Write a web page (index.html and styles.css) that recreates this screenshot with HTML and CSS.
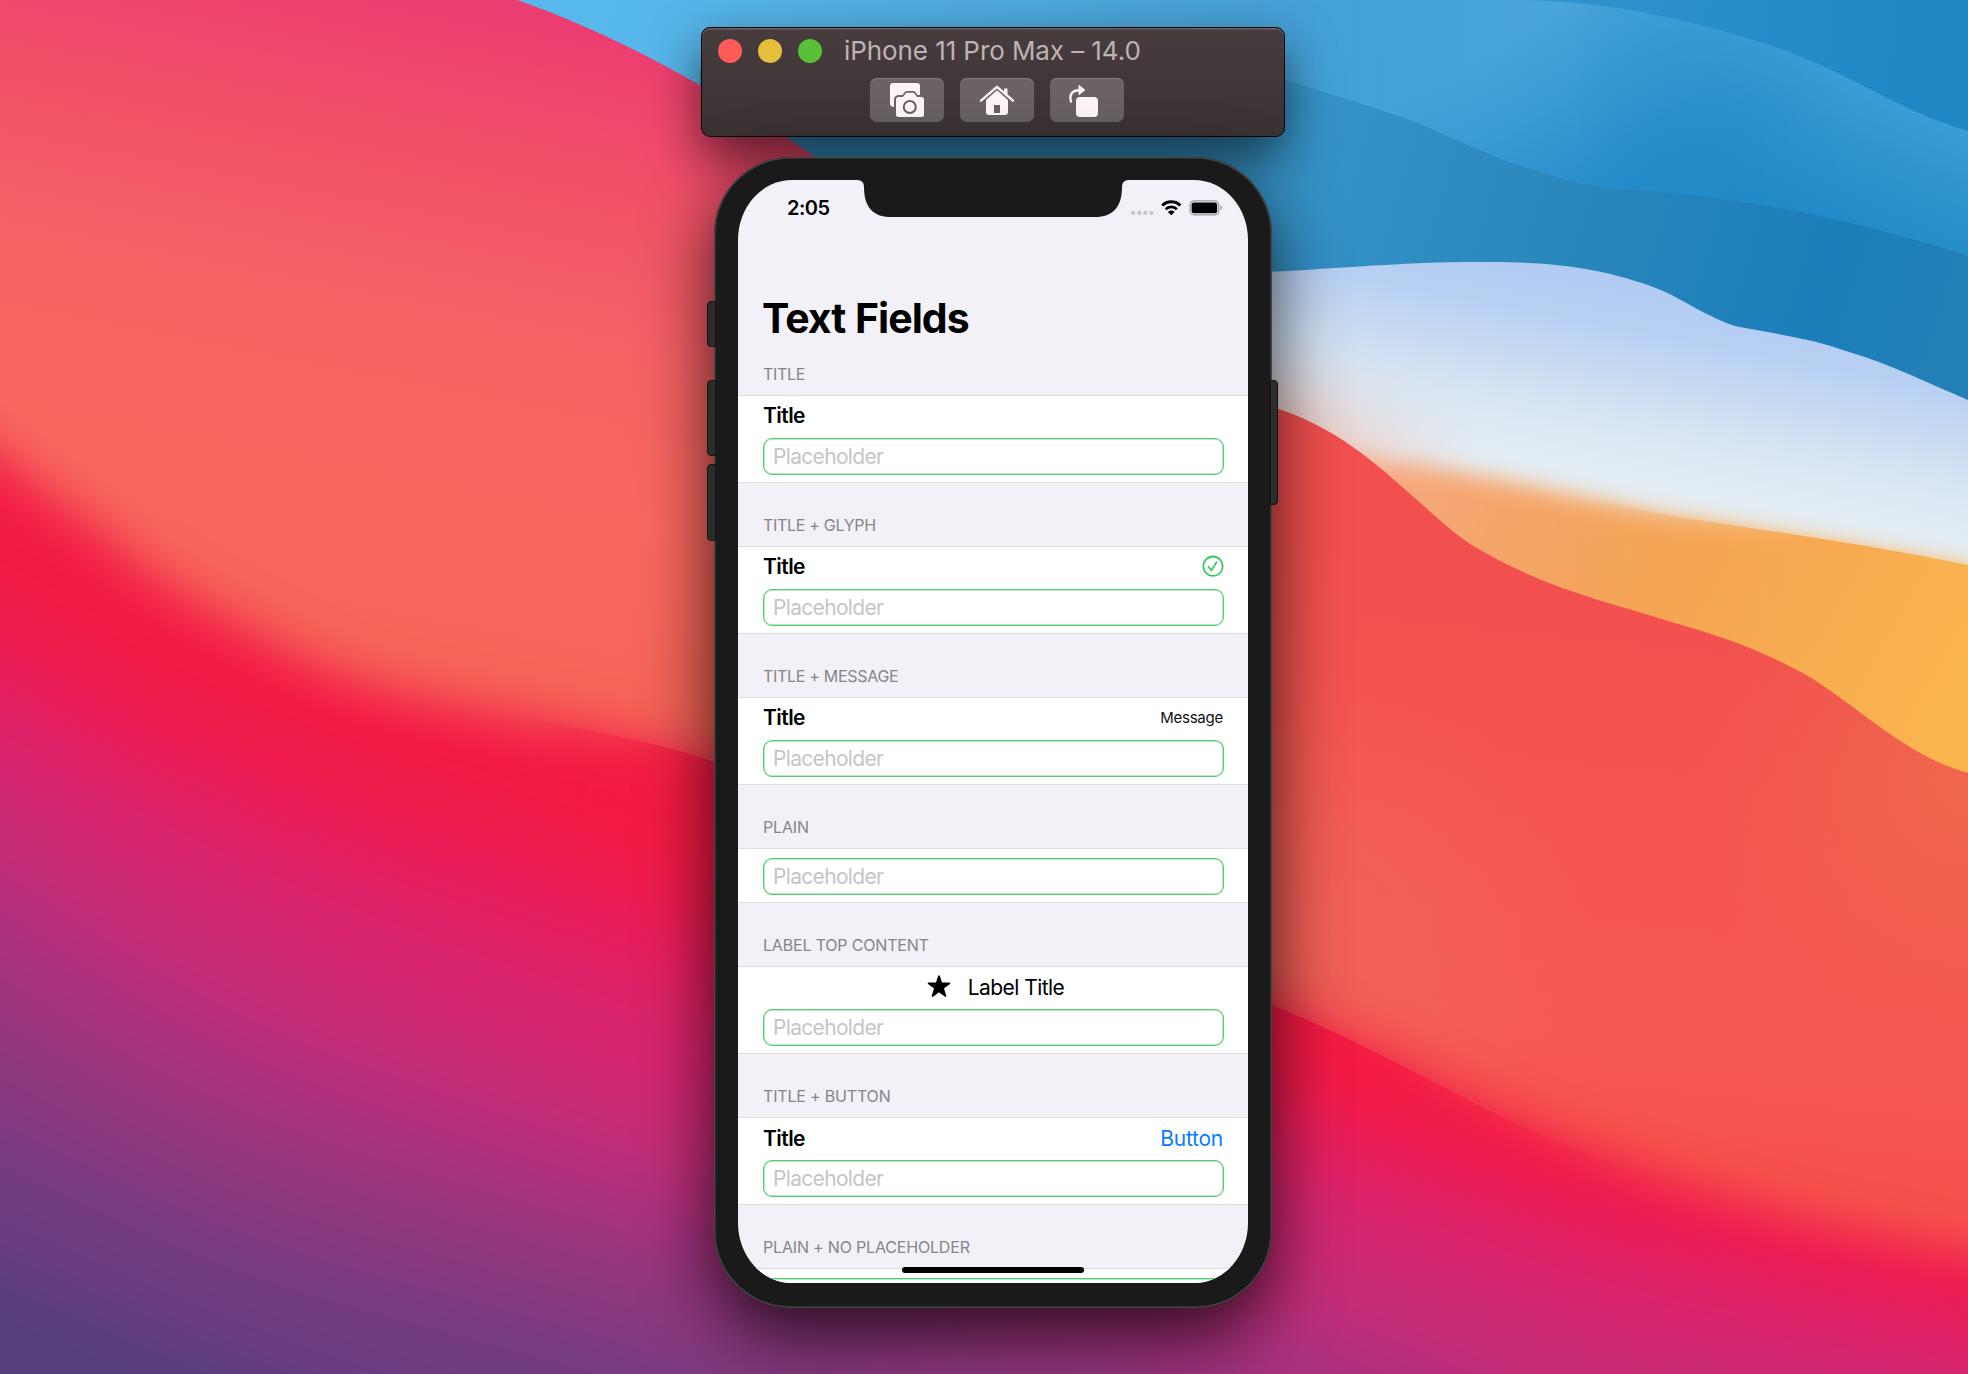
FILE: index.html
```html
<!DOCTYPE html>
<html lang="en">
<head>
<meta charset="utf-8">
<title>iPhone 11 Pro Max – 14.0</title>
<link rel="stylesheet" href="styles.css">
</head>
<body>
<svg class="wallpaper" viewBox="0 0 1968 1374" preserveAspectRatio="none" aria-hidden="true">
  <defs>
    <linearGradient id="sky" gradientUnits="userSpaceOnUse" x1="600" y1="0" x2="1900" y2="150">
      <stop offset="0" stop-color="#57b8eb"/><stop offset=".45" stop-color="#4aa2d6"/><stop offset=".8" stop-color="#2b90cc"/><stop offset="1" stop-color="#1f88c5"/>
    </linearGradient>
    <linearGradient id="sky2" gradientUnits="userSpaceOnUse" x1="1520" y1="30" x2="1620" y2="200">
      <stop offset="0" stop-color="#48a4d9"/><stop offset=".35" stop-color="#3d9cd4"/><stop offset=".75" stop-color="#2c91ce"/><stop offset="1" stop-color="#258cca"/>
    </linearGradient>
    <linearGradient id="sky2b" gradientUnits="userSpaceOnUse" x1="1780" y1="40" x2="1720" y2="180">
      <stop offset="0" stop-color="#3f9fd5"/><stop offset=".4" stop-color="#3095cf"/><stop offset="1" stop-color="#218ac6"/>
    </linearGradient>
    <linearGradient id="sky3" gradientUnits="userSpaceOnUse" x1="1280" y1="120" x2="1960" y2="330">
      <stop offset="0" stop-color="#3894c8"/><stop offset=".5" stop-color="#2785ba"/><stop offset=".8" stop-color="#1b7db9"/><stop offset="1" stop-color="#2380b6"/>
    </linearGradient>
    <linearGradient id="mist" gradientUnits="userSpaceOnUse" x1="1600" y1="275" x2="1555" y2="510">
      <stop offset="0" stop-color="#b2cbf3"/><stop offset=".2" stop-color="#b8d0f3"/><stop offset=".6" stop-color="#d9e6f2"/><stop offset="1" stop-color="#ecf3f7"/>
    </linearGradient>
    <linearGradient id="peach" gradientUnits="userSpaceOnUse" x1="1310" y1="470" x2="1345" y2="345">
      <stop offset="0" stop-color="#f3b49c"/><stop offset=".35" stop-color="#ecc4b8" stop-opacity=".8"/><stop offset="1" stop-color="#d8d4e4" stop-opacity="0"/>
    </linearGradient>
    <linearGradient id="amber" gradientUnits="userSpaceOnUse" x1="1400" y1="450" x2="1940" y2="760">
      <stop offset="0" stop-color="#f7a880"/><stop offset=".22" stop-color="#f5a568"/><stop offset=".5" stop-color="#f6a552"/><stop offset="1" stop-color="#fab54e"/>
    </linearGradient>
    <linearGradient id="coral" gradientUnits="userSpaceOnUse" x1="420" y1="0" x2="300" y2="620">
      <stop offset="0" stop-color="#ec3d71"/><stop offset=".18" stop-color="#f04d69"/><stop offset=".45" stop-color="#f56065"/><stop offset=".75" stop-color="#f8685f"/><stop offset="1" stop-color="#f66558"/>
    </linearGradient>
    <linearGradient id="ember" gradientUnits="userSpaceOnUse" x1="1500" y1="560" x2="1440" y2="1140">
      <stop offset="0" stop-color="#f2504f"/><stop offset=".4" stop-color="#f5554f"/><stop offset=".8" stop-color="#f55a52"/><stop offset="1" stop-color="#f7514c"/>
    </linearGradient>
    <radialGradient id="glowA" gradientUnits="userSpaceOnUse" cx="1968" cy="780" r="280">
      <stop offset="0" stop-color="#ee684d"/><stop offset="1" stop-color="#f1604d" stop-opacity="0"/>
    </radialGradient>
    <radialGradient id="glowB" gradientUnits="userSpaceOnUse" cx="1330" cy="930" r="260">
      <stop offset="0" stop-color="#f0655a" stop-opacity=".7"/><stop offset="1" stop-color="#f0655a" stop-opacity="0"/>
    </radialGradient>
    <linearGradient id="mid" gradientUnits="userSpaceOnUse" x1="0" y1="0" x2="1968" y2="0">
      <stop offset=".27" stop-color="#000"/><stop offset=".37" stop-color="#fff"/><stop offset=".67" stop-color="#fff"/><stop offset=".84" stop-color="#000"/>
    </linearGradient>
    <linearGradient id="amberMid" gradientUnits="userSpaceOnUse" x1="0" y1="0" x2="1968" y2="0">
      <stop offset=".8" stop-color="#000"/><stop offset=".92" stop-color="#fff"/>
    </linearGradient>
    <linearGradient id="skyFade" gradientUnits="userSpaceOnUse" x1="0" y1="0" x2="1968" y2="0">
      <stop offset=".55" stop-color="#000"/><stop offset=".76" stop-color="#fff"/>
    </linearGradient>
    <linearGradient id="skyFadeB" gradientUnits="userSpaceOnUse" x1="0" y1="0" x2="1968" y2="0">
      <stop offset=".8" stop-color="#000"/><stop offset=".94" stop-color="#fff"/>
    </linearGradient>
    <linearGradient id="peachFade" gradientUnits="userSpaceOnUse" x1="0" y1="0" x2="1968" y2="0">
      <stop offset=".66" stop-color="#fff"/><stop offset=".75" stop-color="#000"/>
    </linearGradient>
    <mask id="midMask" maskUnits="userSpaceOnUse" x="0" y="0" width="1968" height="1374"><rect width="1968" height="1374" fill="url(#mid)"/></mask>
    <mask id="amberMask" maskUnits="userSpaceOnUse" x="0" y="0" width="1968" height="1374"><rect width="1968" height="1374" fill="url(#amberMid)"/></mask>
    <mask id="skyMask" maskUnits="userSpaceOnUse" x="0" y="0" width="1968" height="1374"><rect width="1968" height="1374" fill="url(#skyFade)"/></mask>
    <mask id="skyMaskB" maskUnits="userSpaceOnUse" x="0" y="0" width="1968" height="1374"><rect width="1968" height="1374" fill="url(#skyFadeB)"/></mask>
    <mask id="peachMask" maskUnits="userSpaceOnUse" x="0" y="0" width="1968" height="1374"><rect width="1968" height="1374" fill="url(#peachFade)"/></mask>
    <filter id="soft" filterUnits="userSpaceOnUse" x="-200" y="-100" width="2400" height="1700" color-interpolation-filters="sRGB"><feGaussianBlur stdDeviation="24"/></filter>
    <filter id="softer" filterUnits="userSpaceOnUse" x="-300" y="-100" width="2600" height="1800" color-interpolation-filters="sRGB"><feGaussianBlur stdDeviation="34"/></filter>
    <filter id="haze" filterUnits="userSpaceOnUse" x="1000" y="200" width="1200" height="800" color-interpolation-filters="sRGB"><feGaussianBlur stdDeviation="11"/></filter>
    <clipPath id="ridge"><path d="M1000 400H1240C1320 412 1370 458 1417 500C1440 520 1460 540 1484 552C1550 590 1610 602 1671 622C1715 634 1755 648 1795 669C1850 697 1900 755 1968 773V1374H1000Z"/></clipPath>
    <clipPath id="mistClip"><path d="M1000 273H1240C1330 270 1400 261 1493 262C1560 262 1605 270 1648 285C1680 296 1700 314 1735 326C1775 334 1810 338 1849 352C1890 364 1930 384 1968 400V900H1000Z"/></clipPath>
    <clipPath id="lowClip"><path d="M0 0H517C570 18 640 50 701 86C740 108 790 138 830 168L1000 300L1000 400H1240L1500 700H1968V1374H0Z"/></clipPath>
    <path id="crimson" d="M-200 300C-100 370 10 470 90 524C130 555 150 575 181 593C215 613 240 625 272 643C320 668 360 684 407 695C450 705 500 713 543 722C600 732 650 742 700 757C900 830 1100 935 1272 1005C1350 1037 1420 1075 1492 1112C1600 1163 1700 1198 1804 1227C1880 1245 1968 1262 2200 1295V1700H-200Z"/>
  </defs>
  <rect width="1968" height="1374" fill="url(#sky)"/>
  <path mask="url(#skyMask)" fill="url(#sky2)" d="M1050 0H1530C1610 3 1680 17 1760 42C1840 66 1890 108 1968 131V320H1050Z"/>
  <path mask="url(#skyMaskB)" fill="url(#sky2b)" d="M1530 0C1610 3 1680 17 1760 42C1840 66 1890 108 1968 131V320H1530Z"/>
  <path fill="url(#sky3)" d="M700 70H1240C1300 82 1350 100 1404 118C1450 135 1490 158 1537 171C1565 180 1590 187 1617 189C1740 196 1850 218 1968 256V500H700Z"/>
  <g clip-path="url(#mistClip)">
    <rect x="1000" y="250" width="968" height="600" fill="url(#mist)"/>
    <rect x="1000" y="250" width="968" height="400" fill="url(#peach)" mask="url(#peachMask)"/>
    <path filter="url(#haze)" fill="url(#amber)" d="M1200 470C1290 455 1350 458 1404 464C1500 475 1600 503 1671 516C1770 533 1870 547 2100 592V1000H1200Z"/>
    <path mask="url(#amberMask)" fill="url(#amber)" d="M1404 456C1500 475 1600 503 1671 516C1770 531 1870 545 1968 565V1000H1404Z"/>
  </g>
  <g clip-path="url(#ridge)">
    <rect x="1000" y="380" width="968" height="994" fill="url(#ember)"/>
    <rect x="1000" y="380" width="968" height="994" fill="url(#glowA)"/>
    <rect x="1000" y="380" width="968" height="994" fill="url(#glowB)"/>
  </g>
  <path fill="url(#coral)" d="M0 0H517C570 18 640 50 701 86C740 108 790 138 830 168L1000 300V1374H0Z"/>
  <g clip-path="url(#lowClip)">
    <use href="#crimson" fill="#f21c47" filter="url(#soft)"/>
    <use href="#crimson" fill="#f41a43" mask="url(#midMask)"/>
    <g filter="url(#softer)">
      <path fill="#e81e5c" d="M-200 540L0 635C120 710 220 755 350 800S600 870 700 910S1100 1035 1272 1090S1520 1175 1620 1202S1968 1290 2200 1335V1800H-200Z"/>
      <path fill="#d8256e" d="M-200 610L0 705C120 780 220 830 350 880S600 965 700 1005S1100 1100 1272 1150S1520 1235 1620 1262S1968 1335 2200 1380V1800H-200Z"/>
      <path fill="#c52d79" d="M-200 700L0 795C120 870 220 930 350 985S600 1080 700 1115S1100 1180 1272 1228S1520 1320 1620 1345S1968 1390 2200 1430V1800H-200Z"/>
      <path fill="#a6327e" d="M-200 800L0 895C120 980 220 1040 350 1085S600 1170 700 1200S1100 1270 1272 1320S1600 1480 2200 1680V1800H-200Z"/>
      <path fill="#8a387f" d="M-200 920L0 1010C120 1090 220 1140 350 1180S600 1250 700 1275S1100 1350 1272 1420V1800H-200Z"/>
      <path fill="#713c80" d="M-200 1050L0 1130C120 1190 220 1240 350 1275S600 1340 700 1375S1000 1470 1272 1600V1800H-200Z"/>
      <path fill="#563f7e" d="M-200 1190L0 1260C120 1310 220 1360 350 1400S600 1490 700 1530V1800H-200Z"/>
    </g>
  </g>
</svg>

<main class="simulator">
  <header class="window">
    <div class="titlebar">
      <i class="light close"></i><i class="light minimize"></i><i class="light expand"></i>
      <span class="window-title">iPhone 11 Pro Max – 14.0</span>
    </div>
    <div class="toolbar">
      <button class="tool" aria-label="Screenshot"><svg viewBox="0 0 74 44">
        <path class="ink" d="M23 5H47Q50 5 50 8V17H47.500L45.500 14.300Q44.500 13 42.500 13H37.500Q35.500 13 34.500 14.300L32.500 17H28.500Q24 17.500 24 22V29Q20 29 20 25V8Q20 5 23 5Z"/>
        <path class="ink" fill-rule="evenodd" d="M28.500 19H33L35.600 15.500Q36.200 14.800 37.200 14.800H42.800Q43.800 14.800 44.400 15.500L47 19H51.500Q54 19 54 21.500V36.500Q54 39 51.500 39H28.500Q26 39 26 36.500V21.500Q26 19 28.500 19ZM39.800 22A7 7 0 1 0 39.800 36A7 7 0 1 0 39.800 22ZM39.800 24A5 5 0 1 1 39.800 34A5 5 0 1 1 39.800 24Z"/>
      </svg></button>
      <button class="tool" aria-label="Home"><svg viewBox="0 0 74 44">
        <path class="ink" d="M44 10.500H47.500V18L44 15Z"/>
        <path class="roof" d="M21 22.700L37 8.800L53 22.700"/>
        <path class="ink" fill-rule="evenodd" d="M37 12.200L48 22V34Q48 37 45 37H29Q26 37 26 34V22ZM34 27V35H40V27Z"/>
      </svg></button>
      <button class="tool" aria-label="Rotate"><svg viewBox="0 0 74 44">
        <rect class="ink" x="26" y="19" width="22" height="20" rx="4"/>
        <path class="arc" d="M21 23.500C19 17 22 12.300 29 12.300"/>
        <path class="ink" d="M28.500 7.800Q28.500 6.500 29.500 7.300L34.800 11.400Q35.500 12 34.800 12.600L29.500 16.800Q28.500 17.500 28.500 16.200Z"/>
      </svg></button>
    </div>
  </header>

  <section class="phone">
    <i class="side mute"></i><i class="side vol-up"></i><i class="side vol-down"></i><i class="side power"></i>
    <div class="screen">
      <svg class="notch" viewBox="0 0 270 37"><path d="M0 0H270Q264 .5 264 7C264 27 255 37 237 37H33C15 37 6 27 6 7Q6 .5 0 0Z"/></svg>
      <div class="status">
        <span class="time">2:05</span>
        <svg class="status-icons" viewBox="0 0 92 16">
          <g fill="#c5c5ca"><circle cx="3.200" cy="12.900" r="2.150"/><circle cx="9.300" cy="12.900" r="2.150"/><circle cx="15.300" cy="12.900" r="2.150"/><circle cx="21.300" cy="12.900" r="2.150"/></g>
          <g fill="none" stroke="#000" stroke-width="2.900"><path d="M32.300 5.500A12.600 12.600 0 0 1 50.300 5.500"/><path d="M35.700 9.200A8 8 0 0 1 46.900 9.200"/></g>
          <path d="M41.300 15.200L37.900 11.900A4.900 4.900 0 0 1 44.700 11.900Z"/>
          <rect x="60" y=".8" width="28.800" height="14" rx="4" fill="none" stroke="#9c9ca0" stroke-width="1.200"/>
          <rect x="61.600" y="2.400" width="25.600" height="10.800" rx="2.200"/>
          <path d="M90.300 5.300Q92 6.200 92 7.800T90.300 10.300Z" fill="#9c9ca0"/>
        </svg>
      </div>
      <h1 class="large-title">Text Fields</h1>

      <h2 class="group wide">Title</h2>
      <div class="cell">
        <div class="row"><b class="label">Title</b></div>
        <div class="field">Placeholder</div>
      </div>

      <h2 class="group wide">Title + Glyph</h2>
      <div class="cell">
        <div class="row"><b class="label">Title</b>
          <svg class="check" viewBox="0 0 22 22"><circle cx="11" cy="11.200" r="9.700"/><path d="M6.500 11.800L9.400 15.500L14.500 7.300"/></svg>
        </div>
        <div class="field">Placeholder</div>
      </div>

      <h2 class="group wide">Title + Message</h2>
      <div class="cell">
        <div class="row"><b class="label">Title</b><span class="message">Message</span></div>
        <div class="field">Placeholder</div>
      </div>

      <h2 class="group">Plain</h2>
      <div class="cell plain"><div class="field">Placeholder</div></div>

      <h2 class="group">Label Top Content</h2>
      <div class="cell">
        <div class="row centered">
          <svg class="star" viewBox="0 0 24 24"><path d="M12 2L14.500 9.400L22.500 9.400L16.100 14.200L18.500 22L12 17.300L5.500 22L7.900 14.200L1.500 9.400L9.500 9.400Z"/></svg>
          <span class="label-title">Label Title</span>
        </div>
        <div class="field">Placeholder</div>
      </div>

      <h2 class="group">Title + Button</h2>
      <div class="cell">
        <div class="row low"><b class="label">Title</b><a class="link">Button</a></div>
        <div class="field">Placeholder</div>
      </div>

      <h2 class="group">Plain + No Placeholder</h2>
      <div class="cell plain"><div class="field"></div></div>
      <i class="home-indicator"></i>
    </div>
  </section>
</main>
</body>
</html>
```
FILE: styles.css
```css
* { box-sizing: border-box; }

body {
  margin: 0;
  width: 1968px;
  height: 1374px;
  position: relative;
  overflow: hidden;
  font-family: Inter, "Liberation Sans", sans-serif;
  color: #000;
}

.wallpaper {
  position: absolute;
  inset: 0;
  width: 1968px;
  height: 1374px;
}

.simulator {
  position: relative;
  width: 584px;
  margin-left: 701px;
  padding-top: 27px;
  display: flex;
  flex-direction: column;
  align-items: center;
  gap: 20px;
}

/* Window chrome */
.window {
  width: 584px;
  height: 110px;
  border: 1px solid #050505;
  border-radius: 9px;
  background: linear-gradient(#483d3e, #3a3132);
  box-shadow: inset 0 1.5px 0 #6b6263, 0 22px 50px rgba(0, 0, 0, .6);
}

.titlebar {
  height: 45px;
  padding-left: 16px;
  display: flex;
  align-items: center;
  gap: 16px;
}

.light { width: 24px; height: 24px; border-radius: 50%; }
.close { background: #ff5c57; }
.minimize { background: #e5bf3c; }
.expand { background: #59c038; }

.window-title {
  margin-left: 6px;
  font-size: 26px;
  letter-spacing: -.080px;
  line-height: 45px;
  color: #bdb3b4;
  white-space: nowrap;
}

.toolbar {
  display: flex;
  gap: 16px;
  padding: 5px 0 0 168px;
}

.tool {
  width: 74px;
  height: 44px;
  padding: 0;
  border: 0;
  border-radius: 7px;
  background: linear-gradient(#6b6364, #675f60);
  box-shadow: inset 0 1px 0 #837b7c;
}

.tool svg { display: block; width: 74px; height: 44px; }
.ink { fill: #fcf4f6; }
.roof { fill: none; stroke: #fcf4f6; stroke-width: 2.400; stroke-linecap: round; stroke-linejoin: round; }
.arc { fill: none; stroke: #fcf4f6; stroke-width: 2.400; stroke-linecap: round; }

/* Device */
.phone {
  position: relative;
  width: 558px;
  height: 1151px;
  padding: 23px 24px 25px;
  border-radius: 77px;
  background: #1a1a1a;
  box-shadow: inset 0 0 0 1.500px #444, 0 26px 70px rgba(0, 0, 0, .76);
}

.side {
  position: absolute;
  left: -7px;
  width: 9px;
  border: 1px solid #151515;
  border-radius: 4px 0 0 4px;
  background: #2c2c2c;
}
.mute { top: 144px; height: 46px; }
.vol-up { top: 223px; height: 76px; }
.vol-down { top: 307px; height: 77px; }
.power { left: auto; right: -6px; top: 223px; height: 125px; width: 8px; border-radius: 0 4px 4px 0; }

.screen {
  position: relative;
  width: 510px;
  height: 1103px;
  overflow: hidden;
  border-radius: 54px / 60px;
  background: #f2f1f7;
}

.notch {
  position: absolute;
  top: 0;
  left: 120px;
  width: 270px;
  height: 37px;
  fill: #1a1a1a;
}

.status {
  height: 56px;
  padding: 0 26px 0 49px;
  display: flex;
  align-items: center;
  justify-content: space-between;
}
.time { font-size: 20px; font-weight: 600; letter-spacing: -.540px; }
.status-icons { width: 92px; height: 16px; }

.large-title {
  margin: 67px 0 -1px 24px;
  font-size: 41px;
  font-weight: 700;
  letter-spacing: -.970px;
  word-spacing: 1px;
  line-height: 30px;
}

.group {
  margin: 0;
  height: 63px;
  padding: 30px 25px 9px;
  font-size: 16px;
  font-weight: 400;
  line-height: 24px;
  letter-spacing: -.180px;
  text-transform: uppercase;
  color: #85858b;
}
.group.wide { letter-spacing: -.300px; }

.cell {
  height: 88px;
  padding: 0 24px 0 25px;
  border: solid #dfdfe3;
  border-width: 1px 0;
  background: #fff;
}
.cell.plain { height: 55px; padding-top: 9px; }

.row {
  height: 38px;
  margin-bottom: 4px;
  padding-right: 1px;
  display: flex;
  align-items: center;
  justify-content: space-between;
}
.row.centered { justify-content: center; gap: 17px; padding: 2px 0 0 4px; }
.row.low { padding-top: 2px; }

.label { font-size: 21px; font-weight: 600; letter-spacing: -.550px; }
.label-title { font-size: 21px; letter-spacing: -.560px; }
.message { font-size: 15px; letter-spacing: -.240px; color: #111; }
.link { font-size: 21px; letter-spacing: -.250px; color: #0a7aff; }
.check { width: 22px; height: 22px; margin-right: -1px; fill: none; stroke: #3ec864; stroke-width: 1.800; stroke-linecap: round; stroke-linejoin: round; }
.star { width: 24px; height: 24px; margin-top: -2px; stroke: #000; stroke-width: 1.600; stroke-linejoin: round; }

.field {
  height: 37px;
  padding-left: 9px;
  border: 1px solid #52cc72;
  border-radius: 9px;
  box-shadow: inset 0 0 0 .500px rgba(82, 204, 114, .8);
  font-size: 21px;
  line-height: 35px;
  letter-spacing: -.670px;
  color: #c5c5c7;
}

.home-indicator {
  position: absolute;
  left: 164px;
  bottom: 10px;
  width: 182px;
  height: 6px;
  border-radius: 3px;
  background: #000;
}
```
